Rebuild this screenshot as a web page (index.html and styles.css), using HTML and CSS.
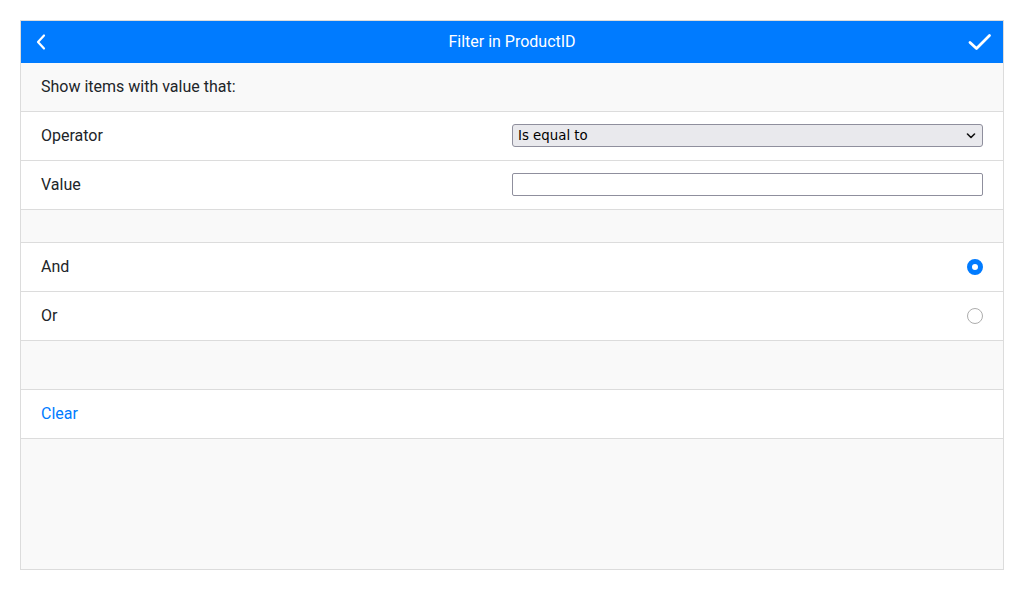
FILE: index.html
```html
<!DOCTYPE html>
<html>
<head>
<meta charset="utf-8">
<link rel="stylesheet" href="styles.css">
</head>
<body>
<div class="panel">
  <div class="header">
    <span class="hbtn back"><svg width="14" height="18" viewBox="0 0 14 18"><path d="M10 2.5 L4 9 L10 15.5" fill="none" stroke="#fff" stroke-width="2.2" stroke-linecap="round" stroke-linejoin="round"/></svg></span>
    <span class="title">Filter in ProductID</span>
    <span class="hbtn ok"><svg width="24" height="18" viewBox="0 0 24 18"><path d="M2 9.5 L8.5 15.5 L21.5 2.5" fill="none" stroke="#fff" stroke-width="2.8" stroke-linecap="round" stroke-linejoin="round"/></svg></span>
  </div>
  <div class="row gray">Show items with value that:</div>
  <div class="row">
    <div class="col">Operator</div>
    <div class="col">
      <div class="selwrap">
        <select class="ctrl sel"><option>Is equal to</option></select>
        <svg class="chev" width="10" height="6" viewBox="0 0 10 6"><path d="M1.5 1 L5 4.5 L8.5 1" fill="none" stroke="#111" stroke-width="1.6" stroke-linecap="round" stroke-linejoin="round"/></svg>
      </div>
    </div>
  </div>
  <div class="row">
    <div class="col">Value</div>
    <div class="col"><input class="ctrl inp" type="text"></div>
  </div>
  <div class="spacer small"></div>
  <div class="row between">
    <span>And</span><span class="radio on"></span>
  </div>
  <div class="row between">
    <span>Or</span><span class="radio"></span>
  </div>
  <div class="spacer"></div>
  <div class="row link">Clear</div>
  <div class="fill"></div>
</div>
</body>
</html>
```
FILE: styles.css
```css
html, body { margin: 0; padding: 0; background: #fff; }
body { padding: 20px; font-family: Roboto, "Noto Sans", sans-serif; font-size: 16px; color: #212529; }
.panel { border: 1px solid #dcdcdc; height: 548px; display: flex; flex-direction: column; background: #f9f9f9; }
.header { height: 42px; background: #007bff; color: #fff; display: grid; grid-template-columns: 1fr auto 1fr; align-items: center; padding: 0 12px; flex: none; box-sizing: border-box; }
.title { font-size: 16px; padding-bottom: 1px; }
.hbtn { display: flex; align-items: center; }
.back svg { margin-left: 1px; }
.ok { justify-content: flex-end; }
.ok svg { margin-right: -1px; }
.row { box-sizing: content-box; flex: none; display: flex; align-items: center; padding: 0 20px 2px; height: 46px; border-bottom: 1px solid #dcdcdc; background: #fff; }
.row.gray { background: #f9f9f9; }
.col { flex: 1 1 0; min-width: 0; }
.ctrl { width: 100%; box-sizing: border-box; display: block; margin: 0; }
.selwrap { position: relative; margin-top: 1px; }
.sel { appearance: none; -webkit-appearance: none; height: 23px; background: #e9e9ed; border: 1px solid #8f8f9d; border-radius: 3px; font-family: "DejaVu Sans", sans-serif; font-size: 13.33px; color: #000; padding: 0 20px 0 5px; }
.chev { position: absolute; right: 7px; top: 9px; }
.inp { height: 23px; background: #fff; border: 1px solid #8f8f9d; border-radius: 2px; margin-top: 1px; }
.between { justify-content: space-between; }
.spacer { height: 48px; flex: none; border-bottom: 1px solid #dcdcdc; background: #f9f9f9; }
.spacer.small { height: 32px; }
.link { color: #007bff; }
.fill { flex: 1; background: #f9f9f9; }
.radio { width: 16px; height: 16px; box-sizing: border-box; border-radius: 50%; border: 1px solid #adadad; background: #fff; margin-top: 2px; }
.radio.on { border: 5px solid #007bff; background: #fff; }
```
